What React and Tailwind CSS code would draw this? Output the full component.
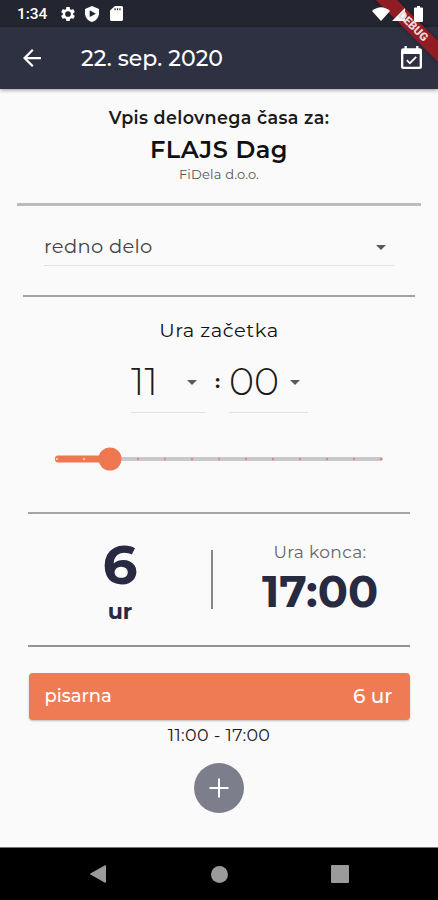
import React from "react";

function Caret({ className = "" }) {
  return (
    <svg className={className} width="10" height="5" viewBox="0 0 10 5" fill="#5a5a5a">
      <path d="M0 0h10L5 5z" />
    </svg>
  );
}

function StatusBar() {
  return (
    <div className="flex h-[27px] shrink-0 items-center bg-[#232530] pl-[17px] pr-[15px] text-white">
      <span className="w-[43px] pt-[2px] font-[Roboto] text-[15.5px] font-medium leading-none tracking-[-0.1px]">1:34</span>
      <svg className="h-4 w-4" viewBox="1 1 22 22" fill="currentColor">
        <path d="M19.14 12.94c.04-.3.06-.61.06-.94 0-.32-.02-.64-.07-.94l2.03-1.58c.18-.14.23-.41.12-.61l-1.92-3.32c-.12-.22-.37-.29-.59-.22l-2.39.96c-.5-.38-1.03-.7-1.62-.94l-.36-2.54c-.04-.24-.24-.41-.48-.41h-3.84c-.24 0-.43.17-.47.41l-.36 2.54c-.59.24-1.13.57-1.62.94l-2.39-.96c-.22-.08-.47 0-.59.22L2.74 8.87c-.12.21-.08.47.12.61l2.03 1.58c-.05.3-.09.63-.09.94s.02.64.07.94l-2.03 1.58c-.18.14-.23.41-.12.61l1.92 3.32c.12.22.37.29.59.22l2.39-.96c.5.38 1.03.7 1.62.94l.36 2.54c.05.24.24.41.48.41h3.84c.24 0 .44-.17.47-.41l.36-2.54c.59-.24 1.13-.56 1.62-.94l2.39.96c.22.08.47 0 .59-.22l1.92-3.32c.12-.22.07-.47-.12-.61l-2.01-1.58zM12 15.9a3.9 3.9 0 1 1 0-7.8 3.9 3.9 0 0 1 0 7.8z" />
      </svg>
      <svg className="ml-[9px] h-4 w-[14px]" viewBox="3 1 18 22" preserveAspectRatio="none" fill="currentColor">
        <path fillRule="evenodd" d="M12 1 3 5v6c0 5.55 3.84 10.74 9 12 5.16-1.26 9-6.45 9-12V5zM9 7v9l8-4.500z" />
      </svg>
      <svg className="ml-[11px] h-[15px] w-[13px]" viewBox="4 2 16 20" preserveAspectRatio="none" fill="currentColor">
        <path fillRule="evenodd" d="M18 2h-8L4 8v12c0 1.100.9 2 2 2h12c1.100 0 2-.9 2-2V4c0-1.100-.9-2-2-2zM9.500 5h1.500v2.500H9.500zM12.500 5H14v2.500h-1.500zM15.500 5H17v2.500h-1.500z" />
      </svg>
      <svg className="relative z-30 ml-auto h-[14px] w-[18px]" viewBox="0 0 18 14" fill="currentColor">
        <path d="M0 4Q9-3.500 18 4L9 14z" />
      </svg>
      <svg className="relative z-30 ml-[2px] mt-px h-[13px] w-[13px]" viewBox="0 0 14 14" fill="currentColor">
        <path d="M14 0v14H0z" />
      </svg>
      <svg className="relative z-30 ml-[9px] h-[16px] w-[9px]" viewBox="0 0 9 16" fill="currentColor">
        <path d="M3 0h3v1.500h2q1 0 1 1V15q0 1-1 1H1q-1 0-1-1V2.500q0-1 1-1h2z" />
      </svg>
    </div>
  );
}

function AppBar() {
  return (
    <div className="z-10 flex h-[62px] shrink-0 items-center bg-[#2e3142] pl-[23px] pr-[16px] text-white shadow-[0_1px_4px_rgba(0,0,0,0.4)]">
      <svg className="h-[18px] w-[18px]" viewBox="4 4 16 16" fill="currentColor">
        <path d="M20 11H7.830l5.590-5.590L12 4l-8 8 8 8 1.410-1.410L7.830 13H20z" />
      </svg>
      <h1 className="ml-[40px] mt-[2px] whitespace-nowrap text-[22px] font-medium leading-none tracking-[0.080px]">22. sep. 2020</h1>
      <svg className="ml-auto mb-px h-[23px] w-[21px]" viewBox="3 1 18 20" preserveAspectRatio="none" fill="currentColor">
        <path fillRule="evenodd" d="M19 3h-1V1h-2v2H8V1H6v2H5a2 2 0 0 0-2 2v14c0 1.100.9 2 2 2h14a2 2 0 0 0 2-2V5a2 2 0 0 0-2-2zm0 16H5V8h14zM16.530 11.060l-1.060-1.060-4.880 4.880-2.110-2.110-1.060 1.060L10.590 17z" />
      </svg>
    </div>
  );
}

function HourSlider() {
  const ticks = Array.from({ length: 13 }, (_, i) => i);
  return (
    <svg className="mx-auto block h-6 w-[330px]" viewBox="0 0 330 24">
      <rect x="56" y="10" width="273" height="4" rx="2" fill="#c9c9c9" />
      <rect x="1" y="8.500" width="55" height="7" rx="3" fill="#ee7650" />
      {ticks.map((i) => (
        <circle key={i} cx={3 + i * 27} cy="12" r="1.200" fill={i < 2 ? "#f8c3ae" : "#e98579"} />
      ))}
      <circle cx="56" cy="12" r="11.500" fill="#ee7650" />
    </svg>
  );
}

export default function App() {
  return (
    <div className="relative flex h-[900px] w-[438px] flex-col overflow-hidden bg-[#fafafa] font-[Montserrat,Inter,sans-serif] text-[#1b1b1b]">
      <StatusBar />
      <AppBar />

      <main className="flex h-[758px] shrink-0 flex-col whitespace-nowrap leading-none">
        <header className="flex h-[114px] flex-col items-center pt-[19px]">
          <p className="flex h-5 items-center text-[17.500px] font-semibold tracking-[0.370px]">Vpis delovnega časa za:</p>
          <h2 className="mt-[10px] flex h-6 items-center text-[24px] font-semibold tracking-[0.500px] text-[#111]">FLAJS Dag</h2>
          <p className="mt-[4px] flex h-4 items-center text-[13px] font-normal tracking-[0.200px] text-[#555]">FiDela d.o.o.</p>
        </header>
        <hr className="mx-[17px] h-[3px] shrink-0 border-0 bg-[#bcbcbc]" />

        <section className="h-[89px]">
          <div className="ml-[44px] mt-[24px] flex h-[36px] w-[350px] items-center justify-between border-b border-[#e2e2e2] pr-[8px]">
            <span className="mb-px text-[19.500px] font-normal tracking-[0.300px] text-[#444]">redno delo</span>
            <Caret />
          </div>
        </section>
        <hr className="mx-[23px] h-[2px] shrink-0 border-0 bg-[#a2a2a2]" />

        <section className="flex h-[215px] flex-col">
          <h3 className="mt-[22px] flex h-6 items-center justify-center text-[19.500px] font-normal tracking-[0.500px] text-[#111]">Ura začetka</h3>
          <div className="ml-[131px] mt-[16px] flex h-[54px]">
            <div className="flex w-[75px] items-center justify-between border-b border-[#e2e2e2] pb-[7px] pr-[9px]">
              <span className="text-[38px] font-light">11</span>
              <Caret />
            </div>
            <span className="flex w-[23px] items-center justify-center pb-[9px] text-[18px] font-bold">:</span>
            <div className="flex w-[79px] items-center justify-between border-b border-[#e2e2e2] pb-[7px] pr-[8px]">
              <span className="text-[38px] font-light">00</span>
              <Caret />
            </div>
          </div>
          <div className="mt-[34px]">
            <HourSlider />
          </div>
        </section>
        <hr className="mx-[28px] h-[2px] shrink-0 border-0 bg-[#a5a5a7]" />

        <section className="flex h-[131px] text-[#272a41]">
          <div className="flex w-[183px] flex-col items-center pl-[57px] pt-[27px]">
            <span className="flex h-[46px] items-center text-[55px] font-bold">6</span>
            <span className="mt-[13px] flex h-6 items-center text-[22px] font-bold">ur</span>
          </div>
          <div className="ml-[28px] mt-[36px] h-[59px] w-[2px] bg-[#85858b]" />
          <div className="flex w-[214px] flex-col items-center pt-[28px]">
            <span className="flex h-5 items-center text-[17px] font-normal tracking-[0.400px] text-[#666]">Ura konca:</span>
            <span className="mt-[8px] flex h-[42px] items-center text-[44.500px] font-bold">17:00</span>
          </div>
        </section>
        <hr className="mx-[28px] h-[2px] shrink-0 border-0 bg-[#929294]" />

        <section className="flex flex-col items-center pt-[26px]">
          <div className="flex h-[47px] w-[381px] items-center justify-between rounded-[4px] bg-[#ef7b54] pb-[2px] pl-[16px] pr-[17px] text-white shadow-[0_1px_2px_rgba(0,0,0,0.25)]">
            <span className="text-[18px] font-medium">pisarna</span>
            <span className="text-[20px] font-medium">6 ur</span>
          </div>
          <p className="mt-[6px] flex h-[18px] items-center text-[17.500px] tracking-[0.300px]">11:00 - 17:00</p>
          <button className="mt-[19px] flex h-[50px] w-[50px] items-center justify-center rounded-full bg-[#7c7e8b]">
            <svg className="h-5 w-5" viewBox="0 0 20 20" fill="white">
              <path d="M9 0.500h2V9h8.500v2H11v8.500H9V11H0.500V9H9z" />
            </svg>
          </button>
        </section>
      </main>

      <nav className="flex h-[53px] shrink-0 items-center border-t border-[#777] bg-black">
        <svg className="ml-[90px] h-[18px] w-4" viewBox="0 0 16 18" fill="#9b9b9b">
          <path d="M15 .3Q16 0 16 1v16q0 1-1 .7L.4 9.600Q-.2 9 .4 8.400z" />
        </svg>
        <div className="ml-[105px] h-[17px] w-[17px] rounded-full bg-[#9b9b9b]" />
        <div className="ml-[103px] h-[18px] w-[18px] rounded-[1px] bg-[#9b9b9b]" />
      </nav>

      <div className="absolute -right-[45px] top-[19px] z-20 h-[15px] w-[140px] rotate-45 bg-[#8f1d23] shadow-[0_0_4px_rgba(0,0,0,0.4)]" />
      <div className="absolute -right-[45px] top-[19px] z-40 flex h-[15px] w-[140px] rotate-45 items-center justify-center font-[Roboto] text-[11.500px] font-black leading-none text-[#ead9dc]">
        DEBUG
      </div>
    </div>
  );
}
